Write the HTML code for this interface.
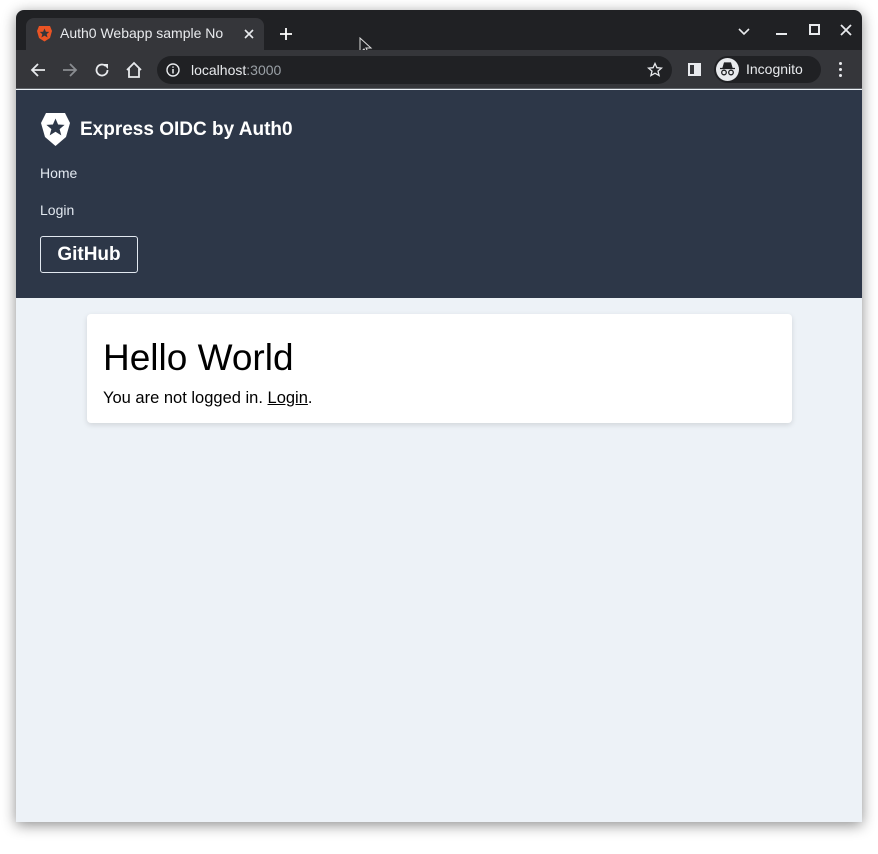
<!DOCTYPE html>
<html><head><meta charset="utf-8"><style>
*{margin:0;padding:0;box-sizing:border-box}
body{width:878px;height:854px;background:#fff;font-family:"Liberation Sans",sans-serif;position:relative;overflow:hidden}
.win{position:absolute;left:16px;top:10px;width:846px;height:812px;background:#edf2f7;border-radius:8px 8px 0 0;overflow:hidden;box-shadow:0 3px 14px rgba(0,0,0,.45)}
.tabbar{position:absolute;left:0;top:0;width:846px;height:40px;background:#202124}
.tab{position:absolute;left:10px;top:8px;width:238px;height:32px;background:#35363a;border-radius:8px 8px 0 0}
.tab .t{position:absolute;left:34px;top:7px;color:#e8eaed;font-size:14px;white-space:nowrap;width:180px;overflow:hidden}
.toolbar{position:absolute;left:0;top:40px;width:846px;height:39px;background:#35363a;border-bottom:1px solid #5f6368}
.omni{position:absolute;left:141px;top:6px;width:515px;height:28px;background:#202124;border-radius:14px}
.omni .u{position:absolute;left:34px;top:6px;font-size:14px;color:#e8eaed}
.omni .u span{color:#9aa0a6}
.incog{position:absolute;left:698px;top:6px;width:107px;height:27px;background:#202124;border-radius:14px}
.incog .t{position:absolute;left:32px;top:5px;color:#e8eaed;font-size:14px}
.header{position:absolute;left:0;top:80px;width:846px;height:208px;background:#2d3748}
.brand{position:absolute;left:64px;top:29px;color:#fff;font-weight:bold;font-size:19px;letter-spacing:0}
.nav{position:absolute;left:24px;color:#e2e8f0;font-size:14px}
.gh{position:absolute;left:24px;top:146px;width:98px;height:37px;border:1px solid #e2e8f0;border-radius:3px;color:#fff;font-weight:bold;font-size:19px;text-align:center;line-height:35px}
.card{position:absolute;left:71px;top:304px;width:705px;height:109px;background:#fff;border-radius:4px;box-shadow:0 2px 6px rgba(0,0,0,.12)}
.card h1{position:absolute;left:16px;top:23px;font-weight:normal;font-size:37px;color:#000;letter-spacing:0}
.card p{position:absolute;left:16px;top:75px;font-size:16.5px;color:#000;letter-spacing:0}
.card a{color:#000;text-decoration:underline}
</style></head><body>
<div class="win">
 <div class="tabbar">
  <div class="tab">
   <svg style="position:absolute;left:10px;top:7px" width="17" height="17" viewBox="0 0 17 17"><path d="M3 1h11l2 5-2 7-5.5 3.5L3 13 1 6z" fill="#eb5424"/><path d="M8.5 3.5l1.4 3.2 3.4.2-2.6 2.2.9 3.4-3.1-1.9-3.1 1.9.9-3.4L3.7 6.9l3.4-.2z" fill="#35363a"/></svg>
   <div class="t">Auth0 Webapp sample No</div>
   <svg style="position:absolute;left:217px;top:10px" width="12" height="12" viewBox="0 0 12 12"><path d="M2 2l8 8M10 2l-8 8" stroke="#e8eaed" stroke-width="1.6"/></svg>
  </div>
  <svg style="position:absolute;left:263px;top:17px" width="14" height="14" viewBox="0 0 14 14"><path d="M7 1v12M1 7h12" stroke="#fff" stroke-width="1.8"/></svg>
  <svg style="position:absolute;left:343px;top:27px" width="14" height="20" viewBox="0 0 14 20"><path d="M1 1v15l4-4 3 6 2-1-3-6h5z" fill="#202124" stroke="#ddd" stroke-width="1"/></svg>
  <svg style="position:absolute;left:722px;top:18px" width="12" height="8" viewBox="0 0 12 8"><path d="M1 1l5 5 5-5" stroke="#e8eaed" stroke-width="1.6" fill="none"/></svg>
  <div style="position:absolute;left:760px;top:23px;width:11px;height:2px;background:#e8eaed"></div>
  <div style="position:absolute;left:793px;top:14px;width:11px;height:11px;border:2px solid #e8eaed"></div>
  <svg style="position:absolute;left:824px;top:14px" width="12" height="12" viewBox="0 0 12 12"><path d="M1 1l10 10M11 1L1 11" stroke="#e8eaed" stroke-width="1.8"/></svg>
 </div>
 <div class="toolbar">
  <svg style="position:absolute;left:14px;top:12px" width="16" height="16" viewBox="0 0 16 16"><path d="M15 8H2M8 2L2 8l6 6" stroke="#e8eaed" stroke-width="1.8" fill="none"/></svg>
  <svg style="position:absolute;left:46px;top:12px" width="16" height="16" viewBox="0 0 16 16"><path d="M1 8h13M8 2l6 6-6 6" stroke="#8a8d91" stroke-width="1.8" fill="none"/></svg>
  <svg style="position:absolute;left:78px;top:12px" width="16" height="16" viewBox="0 0 16 16"><path d="M13.5 8A5.5 5.5 0 1 1 11.5 3.8" stroke="#e8eaed" stroke-width="1.8" fill="none"/><path d="M9 2h5v5z" fill="#e8eaed"/></svg>
  <svg style="position:absolute;left:109px;top:11px" width="18" height="18" viewBox="0 0 18 18"><path d="M2 9L9 2l7 7M4 7.5V16h10V7.5" stroke="#e8eaed" stroke-width="1.8" fill="none"/></svg>
  <div class="omni">
   <svg style="position:absolute;left:9px;top:7px" width="14" height="14" viewBox="0 0 14 14"><circle cx="7" cy="7" r="6" stroke="#e8eaed" stroke-width="1.4" fill="none"/><path d="M7 6v4.5M7 3.5v1.3" stroke="#e8eaed" stroke-width="1.5"/></svg>
   <div class="u">localhost<span>:3000</span></div>
   <svg style="position:absolute;left:490px;top:6px" width="16" height="16" viewBox="0 0 16 16"><path d="M8 1.5l1.9 4.2 4.6.4-3.5 3 1.1 4.5L8 11.2l-4.1 2.4 1.1-4.5-3.5-3 4.6-.4z" stroke="#e8eaed" stroke-width="1.3" fill="none"/></svg>
  </div>
  <div style="position:absolute;left:672px;top:13px;width:13px;height:13px;border:2px solid #e8eaed"><div style="position:absolute;right:0;top:0;width:5px;height:9px;background:#e8eaed"></div></div>
  <div class="incog">
   <div style="position:absolute;left:2px;top:2px;width:23px;height:23px;border-radius:50%;background:#e8eaed"></div>
   <svg style="position:absolute;left:5px;top:6px" width="17" height="15" viewBox="0 0 17 15"><path d="M4 6l1.5-5h6L13 6z M1 6.5h15" stroke="#202124" stroke-width="1.3" fill="#202124"/><circle cx="5" cy="10.5" r="2.3" stroke="#202124" stroke-width="1.3" fill="none"/><circle cx="12" cy="10.5" r="2.3" stroke="#202124" stroke-width="1.3" fill="none"/></svg>
   <div class="t">Incognito</div>
  </div>
  <div style="position:absolute;left:823px;top:12px;width:3px;height:3px;background:#e8eaed;border-radius:50%;box-shadow:0 6px 0 #e8eaed,0 12px 0 #e8eaed"></div>
 </div>
 <div class="header">
  <svg style="position:absolute;left:24px;top:22px" width="31" height="35" viewBox="0 0 31 35"><path d="M6 1h19l5 10-4 14-10.5 9L5 25 1 11z" fill="#fff"/><path d="M15.5 6.5l2.6 6 6.5.4-5 4.2 1.7 6.3-5.8-3.6-5.8 3.6 1.7-6.3-5-4.2 6.5-.4z" fill="#2d3748"/></svg>
  <div class="brand">Express OIDC by Auth0</div>
  <div class="nav" style="top:75px">Home</div>
  <div class="nav" style="top:112px">Login</div>
  <div class="gh">GitHub</div>
 </div>
 <div class="card">
  <h1>Hello World</h1>
  <p>You are not logged in. <a>Login</a>.</p>
 </div>
</div>
</body></html>
